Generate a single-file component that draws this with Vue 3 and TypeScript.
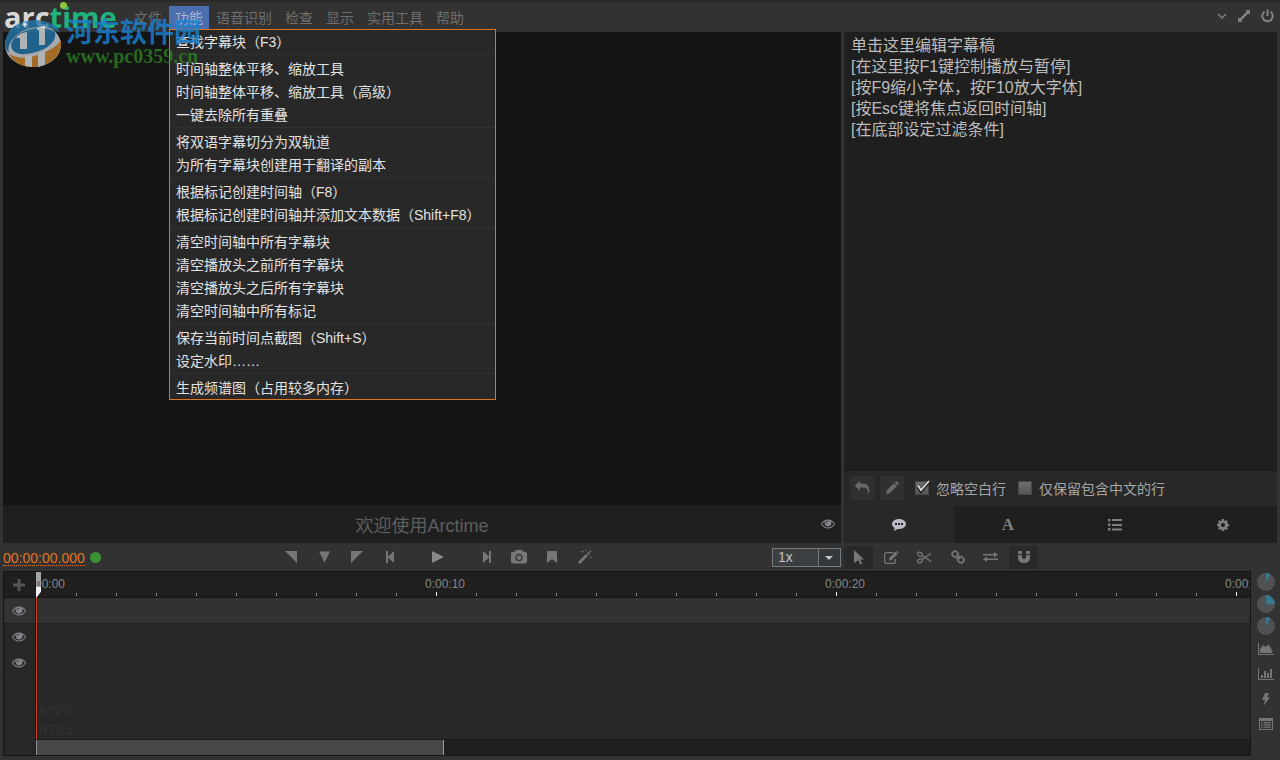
<script setup lang="ts">
import { ref } from 'vue'

interface Glyph { box: string; d: string; w: number; h: number }

const eyePath = 'M1664 960q-152-236-381-353 61 104 61 225 0 185-131.500 316.500t-316.500 131.500-316.500-131.500-131.500-316.500q0-121 61-225-229 117-381 353 133 205 333.500 326.500t434.500 121.500 434.500-121.500 333.500-326.500zm-720-384q0-20-14-34t-34-14q-125 0-214.500 89.500t-89.500 214.500q0 20 14 34t34 14 34-14 14-34q0-86 61-147t147-61q20 0 34-14t14-34zm848 384q0 34-20 69-140 230-376.500 368.500t-499.500 138.500-499.500-139-376.500-368q-20-35-20-69t20-69q140-229 376.500-368t499.500-139 499.500 139 376.500 368q20 35 20 69z'

const menus = ['文件', '功能', '语音识别', '检查', '显示', '实用工具', '帮助']
const openMenu = ref('功能')
const menuGroups: string[][] = [
  ['查找字幕块（F3）'],
  ['时间轴整体平移、缩放工具', '时间轴整体平移、缩放工具（高级）', '一键去除所有重叠'],
  ['将双语字幕切分为双轨道', '为所有字幕块创建用于翻译的副本'],
  ['根据标记创建时间轴（F8）', '根据标记创建时间轴并添加文本数据（Shift+F8）'],
  ['清空时间轴中所有字幕块', '清空播放头之前所有字幕块', '清空播放头之后所有字幕块', '清空时间轴中所有标记'],
  ['保存当前时间点截图（Shift+S）', '设定水印……'],
  ['生成频谱图（占用较多内存）'],
]
function toggle(name: string) {
  openMenu.value = openMenu.value === name ? '' : name
}

const script = ref([
  '单击这里编辑字幕稿',
  '[在这里按F1键控制播放与暂停]',
  '[按F9缩小字体，按F10放大字体]',
  '[按Esc键将焦点返回时间轴]',
  '[在底部设定过滤条件]',
].join('\n'))
const skipBlank = ref(true)
const chineseOnly = ref(false)
const speed = ref('1x')
const tab = ref(0)

const transport: (Glyph & { name: string })[] = [
  { name: '设为终点', box: '0 0 12 12', d: 'M0 0h12v12z', w: 12, h: 12 },
  { name: '添加标记', box: '0 0 12 12', d: 'M0 0h12L6 12z', w: 11, h: 12 },
  { name: '设为起点', box: '0 0 12 12', d: 'M0 0h12L0 12z', w: 12, h: 12 },
  { name: '上一块', box: '0 0 9 12', d: 'M0 0h2v5.500L8 0v12L2 6.500V12H0z', w: 9, h: 12 },
  { name: '播放', box: '0 0 12 12', d: 'M0 0l12 6L0 12z', w: 12, h: 12 },
  { name: '下一块', box: '0 0 9 12', d: 'M9 0H7v5.500L1 0v12l6-5.500V12h2z', w: 9, h: 12 },
  { name: '截图', box: '-64 60 1920 1664', d: 'M896 672q119 0 203.500 84.500t84.500 203.500-84.500 203.500-203.500 84.500-203.500-84.500-84.500-203.500 84.500-203.500 203.500-84.500zm704-416q106 0 181 75t75 181v896q0 106-75 181t-181 75h-1408q-106 0-181-75t-75-181v-896q0-106 75-181t181-75h224l51-136q19-49 69.500-84.500t103.500-35.500h512q53 0 103.500 35.500t69.500 84.500l51 136h224zm-704 1152q185 0 316.500-131.500t131.500-316.500-131.500-316.500-316.500-131.500-316.500 131.500-131.500 316.500 131.500 316.500 316.500 131.500z', w: 16, h: 14 },
  { name: '书签', box: '0 0 10 12', d: 'M1 0h8q1 0 1 1v11L5 8l-5 4V1q0-1 1-1z', w: 10, h: 12 },
  { name: '魔棒', box: '0 0 14 14', d: 'M0 12L8.200 3.800l1.900 1.900L1.900 14zM9 3l1.200-1.200 2 2L11 5zM5 0l.4 1 1 .4-1 .4L5 2.800l-.4-1-1-.4 1-.4zM2.500 1l.7.7-.7.7-.7-.7zM8 0l.8.8-.8.8-.8-.8zM12.500 0l.4.900.9.400-.9.400-.4.900-.4-.900-.9-.400.900-.400zM12.500 6l.4.900.9.400-.9.400-.4.900-.4-.900-.9-.400.900-.400z', w: 14, h: 14 },
]

const tools: { name: string; id: string; active: boolean }[] = [
  { name: '选择', id: 'pointer', active: true },
  { name: '编辑', id: 'edit', active: false },
  { name: '剪切', id: 'cut', active: false },
  { name: '链接', id: 'link', active: false },
  { name: '交换', id: 'swap', active: false },
  { name: '吸附', id: 'magnet', active: true },
]

const ticks = Array.from({ length: 31 }, (_, i) => ({
  major: i % 10 === 0,
  label: i % 10 === 0 ? `0:00:${String(i).padStart(2, '0')}` : '',
}))
const tracks = [1, 2, 3]
const dials = [
  { name: '音量', d: 'M9 9V0A9 9 0 0 1 13.500 1.200z' },
  { name: '缩放', d: 'M9 9V0A9 9 0 0 1 18 9z' },
  { name: '高度', d: 'M9 9V0A9 9 0 0 1 13.500 1.200z' },
]
const views = [
  { name: '波形', d: 'M0 0h1v11h15v1H0zM2 10V6l3-4 2.500 2L10 1.500 13 5l1.500 5z' },
  { name: '频谱', d: 'M0 0h1v11h15v1H0zM3 7h2v3H3zM6 3h2v7H6zM9 5h2v5H9zM12 1h2v9h-2z' },
  { name: '闪电', d: 'M7 0h4L9 4h3L5.500 13 7 7H4z' },
  { name: '列表', d: 'M1 0h14v12H1zM2 3v8h12V3zM3 4h1.500v1.200H3zM5.500 4H13v1.200H5.500zM3 6.300h1.500v1.200H3zM5.500 6.300H13v1.200H5.500zM3 8.600h1.500v1.200H3zM5.500 8.600H13v1.200H5.500z' },
]
</script>

<template>
  <div class="app">
    <header class="topbar">
      <div class="logo"><span>arc</span><span class="green">time</span><i class="logo-dot"></i></div>
      <nav class="menubar">
        <div v-for="m in menus" :key="m" class="menu">
          <button type="button" class="menu-btn" :class="{ open: openMenu === m }" @click="toggle(m)">{{ m }}</button>
          <div v-if="m === '功能' && openMenu === m" class="dropdown">
            <div v-for="(group, gi) in menuGroups" :key="gi" class="group">
              <button v-for="item in group" :key="item" type="button" class="item">{{ item }}</button>
            </div>
          </div>
        </div>
      </nav>
      <div class="window-actions">
        <button type="button" aria-label="最小化">
          <svg width="10" height="6" viewBox="0 0 10 6"><path d="M1 1l4 4 4-4" fill="none" stroke="currentColor" stroke-width="1.300" /></svg>
        </button>
        <button type="button" aria-label="最大化">
          <svg width="12" height="12" viewBox="0 0 13 13"><path d="M8 0h5v5l-1.600-1.600L3.400 11.400 5 13H0V8l1.600 1.600 8-8z" /></svg>
        </button>
        <button type="button" aria-label="退出">
          <svg width="13" height="14" viewBox="0 0 13 14"><path d="M3.500 2.800a5.200 5.200 0 1 0 6 0M6.500 .5v6.500" fill="none" stroke="currentColor" stroke-width="1.900" /></svg>
        </button>
      </div>
    </header>

    <main class="workspace">
      <section class="player">
        <div class="video"></div>
        <div class="status">
          <span></span>
          <span class="welcome">欢迎使用Arctime</span>
          <button type="button" class="eye" aria-label="预览"><svg width="14" height="14" viewBox="0 64 1792 1792"><path :d="eyePath" /></svg></button>
        </div>
      </section>

      <section class="side">
        <textarea v-model="script" aria-label="字幕稿" spellcheck="false"></textarea>
        <div class="options">
          <button type="button" class="square" aria-label="撤销">
            <svg width="15" height="14" viewBox="0 0 1792 1792"><path d="M1792 1120q0 166-127 451-3 7-10.500 24t-13.500 30-13 22q-12 17-28 17-15 0-23.500-10t-8.500-25q0-9 2.500-26.500t2.500-23.500q5-68 5-123 0-112-19.500-200.500t-54-153.500-89-111.500-117.500-76.500-145.500-43.500-167.500-19-189-5.500h-224v256q0 26-19 45t-45 19-45-19l-512-512q-19-19-19-45t19-45l512-512q19-19 45-19t45 19 19 45v256h224q713 0 875 403 53 134 53 333z" /></svg>
          </button>
          <button type="button" class="square" aria-label="编辑">
            <svg width="13" height="13" viewBox="0 0 13 13"><path d="M0 13l1-4 6.800-6.800 3 3L4 12zM8.600 1.400L9.500.5q.7-.7 1.400 0l1.600 1.600q.7.700 0 1.400l-.9.900z" /></svg>
          </button>
          <label class="check first">
            <span class="box"><input v-model="skipBlank" type="checkbox" /><svg v-if="skipBlank" class="tick" width="16" height="14" viewBox="0 0 16 14"><path d="M3 6.500l3 4.500L14 1.500" fill="none" stroke="#222" stroke-width="3.500" /><path d="M3 5.500l3 4.500L14 1" fill="none" stroke="#dcdcdc" stroke-width="1.800" /></svg></span>
            忽略空白行
          </label>
          <label class="check">
            <span class="box"><input v-model="chineseOnly" type="checkbox" /></span>
            仅保留包含中文的行
          </label>
        </div>
        <div class="tabs">
          <button type="button" :class="{ on: tab === 0 }" aria-label="字幕稿" @click="tab = 0">
            <svg width="14" height="12" viewBox="0 0 14 12"><path fill-rule="evenodd" d="M7 0c3.900 0 7 2.200 7 5s-3.100 5-7 5q-.8 0-1.500-.1Q3.800 11.500 1.500 12q1-1 1.200-2.800Q0 7.700 0 5c0-2.800 3.100-5 7-5zM3 4v2h2V4zm3 0v2h2V4zm3 0v2h2V4z" /></svg>
          </button>
          <button type="button" class="letter" :class="{ on: tab === 1 }" @click="tab = 1">A</button>
          <button type="button" :class="{ on: tab === 2 }" aria-label="列表" @click="tab = 2">
            <svg width="14" height="12" viewBox="0 0 14 12"><path d="M0 0h2.500v2.500H0zM4 0h10v2H4zM0 4.500h2.500V7H0zM4 5h10v2H4zM0 9h2.500v2.500H0zM4 9.500h10v2H4z" /></svg>
          </button>
          <button type="button" :class="{ on: tab === 3 }" aria-label="设置" @click="tab = 3">
            <svg width="14" height="14" viewBox="0 0 1792 1792"><path d="M1152 896q0-106-75-181t-181-75-181 75-75 181 75 181 181 75 181-75 75-181zm512-109v222q0 12-8 23t-20 13l-185 28q-19 54-39 91 35 50 107 138 10 12 10 25t-9 23q-27 37-99 108t-94 71q-12 0-26-9l-138-108q-44 23-91 38-16 136-29 186-7 28-36 28h-222q-14 0-24.500-8.500t-11.500-21.500l-28-184q-49-16-90-37l-141 107q-10 9-25 9-14 0-25-11-126-114-165-168-7-10-7-23 0-12 8-23 15-21 51-66.500t54-70.500q-27-50-41-99l-183-27q-13-2-21-12.500t-8-23.500v-222q0-12 8-23t19-13l186-28q14-46 39-92-40-57-107-138-10-12-10-24 0-10 9-23 26-36 98.500-107.500t94.500-71.500q13 0 26 10l138 107q44-23 91-38 16-136 29-186 7-28 36-28h222q14 0 24.500 8.500t11.500 21.500l28 184q49 16 90 37l142-107q9-9 24-9 13 0 25 10 129 119 165 170 7 8 7 22 0 12-8 23-15 21-51 66.500t-54 70.500q26 50 41 98l183 28q13 2 21 12.500t8 23.500z" /></svg>
          </button>
        </div>
      </section>
    </main>

    <div class="toolbar">
      <div class="transport-bar">
        <div class="clock"><span class="timecode">00:00:00.000</span><i class="led"></i></div>
        <div class="transport">
          <button v-for="b in transport" :key="b.name" type="button" class="tool" :class="{ play: b.name === '播放' }" :aria-label="b.name">
            <svg :width="b.w" :height="b.h" :viewBox="b.box"><path :d="b.d" /></svg>
          </button>
        </div>
        <div class="speed">
          <select v-model="speed" aria-label="播放速度"><option>1x</option><option>2x</option></select>
          <svg class="caret" width="8" height="4" viewBox="0 0 8 4"><path d="M0 0h8L4 4z" /></svg>
        </div>
      </div>
      <div class="tools">
        <button v-for="t in tools" :key="t.id" type="button" class="tool" :class="{ active: t.active }" :aria-label="t.name">
          <svg v-if="t.id === 'pointer'" width="10" height="15" viewBox="0 0 10 15"><path d="M0 0l10 9.500H6.300l2 4.200-2 .9-2-4.300L0 13z" /></svg>
          <svg v-else-if="t.id === 'edit'" width="15" height="13" viewBox="0 0 15 13"><path d="M9.500 1.600h-7q-1.900 0-1.900 1.900v7q0 1.900 1.900 1.900h7q1.900 0 1.900-1.900V8" fill="none" stroke="currentColor" stroke-width="1.200" /><path d="M5 9.500l.4-2.700L11.500.8l2.200 2.200-6.200 6zM12.200.300l.5-.3q.4 0 .7.300l1 1q.5.500 0 1l-.3.300z" /></svg>
          <svg v-else-if="t.id === 'cut'" width="15" height="13" viewBox="0 0 15 13"><g fill="none" stroke="currentColor" stroke-width="1.300"><ellipse cx="3" cy="3.200" rx="2.500" ry="1.800" transform="rotate(30 3 3.200)" /><ellipse cx="3" cy="9.800" rx="2.500" ry="1.800" transform="rotate(-30 3 9.800)" /><path d="M5.200 4.500L14 10.500M5.200 8.500L14 2.500" /></g></svg>
          <svg v-else-if="t.id === 'link'" width="14" height="14" viewBox="0 0 14 14"><g fill="none" stroke="currentColor" stroke-width="1.700"><path d="M6.700 5.800Q8.200 4.500 6.800 3L5.500 1.600Q4 .4 2.600 1.700l-.9.900Q.4 4 1.600 5.500L3 6.800q1.300 1.200 2.600.2M7.300 8.200Q5.800 9.500 7.200 11l1.300 1.400q1.500 1.200 2.900-.1l.9-.9q1.300-1.400.1-2.900L11 7.200q-1.300-1.200-2.600-.2M5 5l4 4" /></g></svg>
          <svg v-else-if="t.id === 'swap'" width="15" height="10" viewBox="0 0 15 10"><path d="M0 2h11V0l4 2.800L11 5.500v-2H0zM15 6.500H4v-2L0 7.300 4 10V8h11z" /></svg>
          <svg v-else width="12" height="12" viewBox="0 0 12 12"><path d="M0 0h4v3H0zM8 0h4v3H8zM0 4h4v2q0 2 2 2t2-2V4h4v2q0 6-6 6T0 6z" /></svg>
        </button>
      </div>
    </div>

    <div class="bottom">
      <div class="timeline">
        <div class="heads">
          <button type="button" class="add" aria-label="添加轨道"><svg width="12" height="12" viewBox="0 0 12 12"><path d="M4.500 0h3v4.500H12v3H7.500V12h-3V7.500H0v-3h4.500z" /></svg></button>
          <div v-for="n in tracks" :key="n" class="head" :class="{ current: n === 1 }">
            <button type="button" class="eye" :aria-label="`轨道 ${n}`"><svg width="14" height="14" viewBox="0 64 1792 1792"><path :d="eyePath" /></svg></button>
          </div>
        </div>
        <div class="canvas">
          <div class="ruler">
            <div v-for="(t, i) in ticks" :key="i" class="tick-cell">
              <span class="label">{{ t.label }}</span>
              <i class="mark" :class="{ major: t.major }"></i>
            </div>
          </div>
          <div v-for="n in tracks" :key="n" class="lane" :class="{ current: n === 1 }"></div>
          <div class="debug"><p>RTP:0</p><p>RTS:1</p></div>
          <div class="scroll"><div class="thumb"></div></div>
          <div class="playhead"><svg width="5" height="26" viewBox="0 0 5 26"><path d="M0 0h5v19.500L0 26z" fill="#a5a5a5" /><path d="M0 15h5v4.500L0 26z" fill="#f2f2f2" /><path d="M1 9h3v5H1z" fill="#94706f" /></svg></div>
        </div>
      </div>
      <aside class="strip">
        <button v-for="d in dials" :key="d.name" type="button" class="dial" :aria-label="d.name">
          <svg width="18" height="18" viewBox="0 0 18 18"><circle cx="9" cy="9" r="9" fill="#505152" /><path :d="d.d" fill="#38778c" /></svg>
        </button>
        <button v-for="v in views" :key="v.name" type="button" class="view" :aria-label="v.name">
          <svg width="16" height="13" viewBox="0 0 16 13"><path fill-rule="evenodd" :d="v.d" /></svg>
        </button>
      </aside>
    </div>

    <div class="watermark">
      <svg width="58" height="50" viewBox="0 0 58 50">
        <ellipse cx="29" cy="27" rx="28" ry="22" fill="#ccd0d2" />
        <path d="M1 27Q2 9 19 4q18-6 34 5l3 6Q48 9 38 9 18 9 8 22q-5 7-3 13-4-4-4-8z" fill="#2277ac" />
        <path d="M7 27Q10 15 27 11q16-3 24 3 2 10-11 17-13 6-24 5-9-2-9-9z" fill="#2277ac" />
        <path d="M5 36q13 7 29 1 19-7 23-15 1 15-11 22-8 5-17 5-17 0-24-13z" fill="#c9822c" />
        <path d="M12 20q3-5 11-6v17h-7V20zM33 10q4-2 8-2v19h-6V12h-2zM21 38l7-1v12l-7-1zM34 36l7-3v14l-7 2z" fill="#d8dbdc" />
        <path d="M19 4l1.500 1 1.500-1v2l1.500 1-2 .5-1 2-1-2-2-.5L19 6z" fill="#e0e4e8" />
      </svg>
      <div class="wm-text"><strong>河东软件园</strong><span>www.pc0359.cn</span></div>
    </div>
  </div>
</template>

<style>
body { background: #323232; }
</style>

<style scoped>
* { box-sizing: border-box; }
.app {
  position: relative;
  display: flex;
  flex-direction: column;
  min-height: 100vh;
  padding-bottom: 4px;
  background: #323232;
  color: #787878;
  font-family: "Liberation Sans", "Noto Sans CJK SC", sans-serif;
  font-size: 14px;
}
button, select, textarea, input { font: inherit; color: inherit; margin: 0; }
button { padding: 0; border: 0; background: none; display: flex; align-items: center; justify-content: center; }
svg { display: block; fill: currentColor; flex: none; }

.topbar { display: flex; align-items: flex-start; height: 32px; border-top: 2px solid #292929; }
.logo { position: relative; width: 128px; padding-left: 4px; font: 700 29px/30px "Open Sans", sans-serif; color: #d8d8d8; white-space: nowrap; }
.logo .green { color: #1fb37c; }
.logo-dot { position: absolute; left: 60px; top: 0; width: 7px; height: 7px; border-radius: 50%; background: #8cc63f; }
.menubar { display: flex; gap: 1px; padding-top: 4px; flex: 1; }
.menu { position: relative; }
.menu-btn { height: 23px; padding: 0 6px 2px; color: #6e6e6e; white-space: nowrap; }
.menu-btn.open { background: #4b6eaf; color: #a9b6ce; }
.dropdown { position: absolute; z-index: 5; top: 23px; left: 0; width: 327px; border: 1px solid #e0751f; background: #282828; }
.group + .group { border-top: 1px solid #303030; margin-top: 1px; padding-top: 2px; }
.item { width: 100%; height: 23px; padding: 0 6px 2px; justify-content: flex-start; color: #e2e2e2; white-space: nowrap; }
.window-actions { display: flex; align-items: center; gap: 11px; height: 28px; padding-right: 6px; color: #858585; }

.workspace, .toolbar { display: grid; grid-template-columns: 1fr 433px; column-gap: 3px; padding: 0 3px; }
.workspace { flex: 1; }
.player, .side { display: flex; flex-direction: column; }
.video { flex: 1; background: #141414; }
.status { display: grid; grid-template-columns: 27px 1fr 27px; align-items: center; height: 38px; background: #1f1f1f; }
.welcome { text-align: center; font-size: 18px; line-height: 24px; padding-top: 3px; color: #5e5e5e; }
.eye { color: #858589; }
.side textarea { flex: 1; width: 100%; min-height: 120px; padding: 3px 7px; border: 0; outline: 0; resize: none; background: #1f1f1f; color: #bcbcbc; font-size: 16px; line-height: 21px; }
.options { display: flex; align-items: center; gap: 6px; height: 35px; padding: 0 0 2px 6px; background: #282828; }
.square { width: 24px; height: 24px; background: #303030; color: #696969; }
.check { display: flex; align-items: center; gap: 6px; margin-right: 6px; color: #a5a5a5; white-space: nowrap; }
.check.first { margin-left: 5px; }
.box { position: relative; width: 15px; height: 14px; }
.box input { appearance: none; display: block; width: 14px; height: 14px; border: 1px solid #484848; background: linear-gradient(#6e6e6e, #565656); }
.tick { position: absolute; left: 0; top: -1px; }
.tabs { display: grid; grid-template-columns: 110px repeat(3, 1fr); height: 37px; background: #1f1f1f; color: #808080; }
.tabs .on { background: #282828; color: #bcbcc6; }
.letter { font: bold 17px/20px "Liberation Serif", serif; }

.toolbar { height: 28px; }
.transport-bar { display: flex; align-items: center; justify-content: space-between; }
.clock { display: flex; align-items: center; gap: 5px; }
.timecode { height: 17px; line-height: 18px; color: #e0751f; border-bottom: 1px dotted #e0751f; }
.led { width: 11px; height: 11px; border-radius: 50%; background: #3b9133; }
.transport, .tools { display: flex; align-items: center; gap: 4px; }
.transport { padding-left: 4px; }
.tool { width: 29px; height: 23px; border-radius: 2px; color: #777; }
.tool.play { margin: 0 15px; color: #8a8a8a; }
.tool.active { background: #292929; }
.speed { position: relative; width: 69px; height: 19px; color: #c6c6c6; }
.speed select { appearance: none; width: 100%; height: 19px; padding: 0 5px; border: 1px solid #777a7a; border-radius: 0; background: linear-gradient(90deg, #3b3f42 45px, #777a7a 45px, #777a7a 46px, #33383c 46px); line-height: 17px; }
.caret { position: absolute; right: 8px; top: 8px; pointer-events: none; }

.bottom { display: flex; padding-left: 3px; }
.timeline { flex: 1; min-width: 0; display: flex; height: 185px; border: 1px solid #151515; background: #282828; }
.heads { width: 32px; border-right: 1px solid #1a1a1a; }
.add { width: 100%; height: 26px; padding-right: 2px; background: #1f1f1f; border-bottom: 1px solid #151515; color: #555; }
.head { display: flex; align-items: center; justify-content: center; height: 26px; padding-right: 2px; border-bottom: 1px solid #222; }
.canvas { position: relative; flex: 1; min-width: 0; display: flex; flex-direction: column; }
.ruler { display: flex; height: 26px; overflow: hidden; background: #1f1f1f; border-bottom: 1px solid #151515; }
.tick-cell { display: flex; flex-direction: column; justify-content: space-between; flex: 0 0 40px; width: 40px; }
.label { margin-left: -11px; height: 20px; font-size: 12px; line-height: 24px; color: #878787; }
.mark { width: 1px; height: 3px; margin-bottom: 1px; background: #888; }
.mark.major { height: 4px; background: #eee; }
.lane { height: 26px; border-bottom: 1px solid #222; }
.current { background: #323232; }
.debug { flex: 1; display: flex; flex-direction: column; justify-content: flex-end; padding-left: 3px; font-size: 12px; line-height: 18px; color: #333; }
.debug p { margin: 0; }
.scroll { height: 16px; border-top: 1px solid #181818; background: #1f1f1f; }
.thumb { width: 408px; max-width: 100%; height: 15px; background: #484848; border-left: 1px solid #999; border-right: 1px solid #999; }
.playhead { position: absolute; top: 0; bottom: 16px; left: 0; width: 5px; background: linear-gradient(90deg, #cf3a1e 1px, transparent 1px); }
.strip { width: 29px; display: flex; flex-direction: column; align-items: center; color: #757575; }
.dial { height: 22px; }
.view { height: 25px; }

.watermark { position: absolute; z-index: 10; left: 4px; top: 18px; display: flex; gap: 4px; opacity: 0.8; pointer-events: none; }
.wm-text { display: flex; flex-direction: column; white-space: nowrap; }
.wm-text strong { font: 700 27px/26px "Noto Sans CJK SC", sans-serif; color: #1a82d4; }
.wm-text span { font: bold 20px/24px "Liberation Serif", serif; color: #2d7f22; }
</style>
